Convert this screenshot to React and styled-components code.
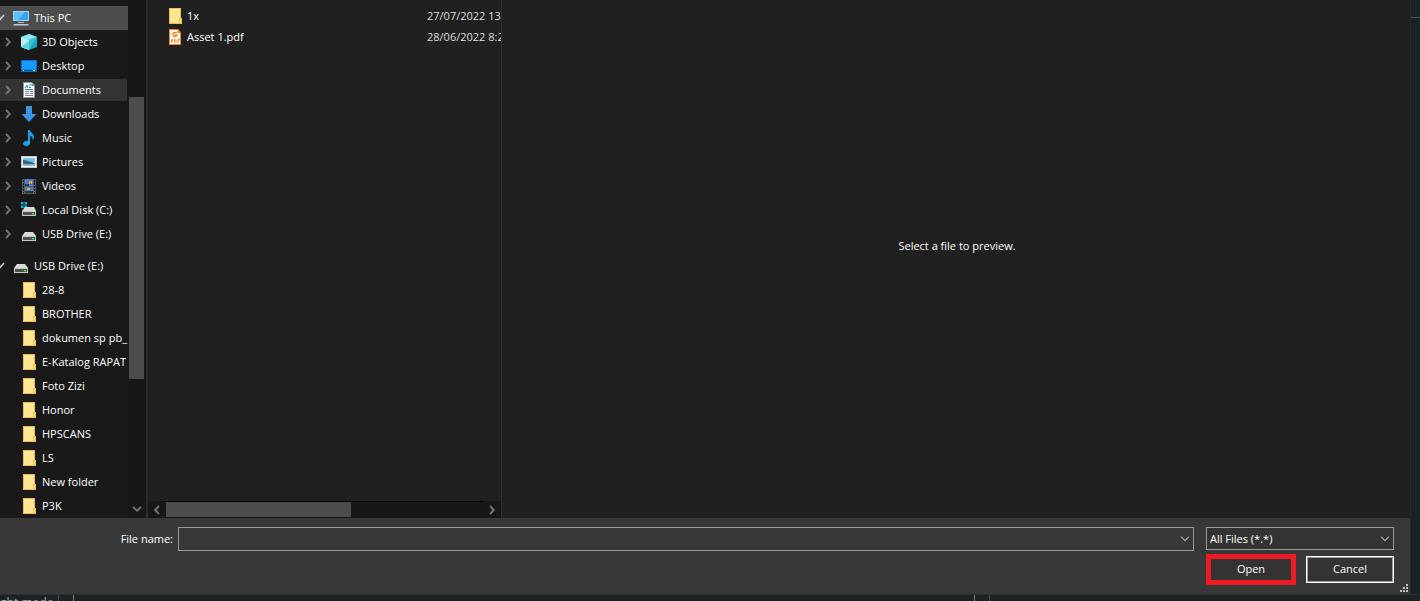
import styled, { createGlobalStyle } from 'styled-components'

const GlobalStyle = createGlobalStyle`
   * {
      box-sizing: border-box;
   }

   body {
      margin: 0;
      background-color: #1b2226;
      color: #ffffff;
      font-family: 'Open Sans', 'Noto Sans', sans-serif;
      font-size: 11px;
      line-height: 16px;
   }

   button,
   input,
   select {
      margin: 0;
      padding: 0;
      border: none;
      background: none;
      color: inherit;
      font: inherit;
   }
`

const Page = styled.div`
   display: grid;
   grid-template-columns: 1fr 9px;
   grid-template-rows: 1fr 7px;
   height: 100vh;
   overflow: hidden;
`

// dialog
const Dialog = styled.main`
   display: flex;
   flex-direction: column;
   min-width: 0;
   min-height: 0;
   border-right: 1px solid #2b2b2b;
   background-color: #383838;
`

const Panes = styled.div`
   display: grid;
   grid-template-columns: 148px 354px 1fr;
   flex: 1;
   min-height: 0;
   background-color: #202020;
`

// navigation pane
const NavPane = styled.nav`
   display: flex;
   min-height: 0;
   border-right: 2px solid #2b2b2b;
   background-color: #171717;
`

const Tree = styled.div`
   flex: 1;
   min-width: 0;
   padding-top: 6px;
   overflow: hidden;
   background-color: #191919;
`

const TreeList = styled.ul`
   margin: 0 0 8px;
   padding: 0;
   list-style: none;
`

const TreeRow = styled.button`
   display: flex;
   align-items: center;
   width: 100%;
   height: 24px;
   padding-left: ${(props) => (props.$root ? '0' : '3px')};
   overflow: hidden;
   white-space: nowrap;
   text-align: left;
   background-color: ${(props) => (props.$selected ? '#4d4d4d' : 'transparent')};
   background-image: ${(props) => (props.$hovered ? 'linear-gradient(#333333, #333333)' : 'none')};
   background-size: 127px 22px;
   background-position: 0 1px;
   background-repeat: no-repeat;
`

const Arrow = styled.span`
   display: flex;
   flex: none;
   width: ${(props) => (props.$root ? '13px' : '18px')};
`

const TreeIcon = styled.span`
   display: flex;
   flex: none;
   width: 16px;
   height: 16px;
   margin-right: 5px;
`

const NavScroll = styled.div`
   display: flex;
   flex-direction: column;
   align-items: center;
   width: 18px;
   padding: 97px 2px 4px 1px;
`

const NavThumb = styled.div`
   width: 15px;
   height: 282px;
   margin-bottom: auto;
   background-color: #4d4d4d;
`

// file list
const FilePane = styled.section`
   display: flex;
   flex-direction: column;
   min-width: 0;
   border-right: 1px solid #2e2e2e;
   overflow: hidden;
`

const FileArea = styled.div`
   flex: 1;
   padding: 5px 0 0 21px;
   overflow: hidden;
`

const FileTable = styled.table`
   width: 100%;
   table-layout: fixed;
   border-collapse: collapse;
   white-space: nowrap;
`

const FileCell = styled.td`
   width: ${(props) => props.$width || 'auto'};
   height: 21px;
   padding: 0;
   overflow: hidden;
   color: ${(props) => (props.$muted ? '#dedede' : '#ffffff')};
`

const FileName = styled.span`
   display: flex;
   align-items: center;
   gap: 5px;
`

const FileScroll = styled.div`
   display: flex;
   align-items: center;
   height: 17px;
   padding: 0 4px;
   background-color: #171717;
`

const FileTrack = styled.div`
   flex: 1;
   height: 17px;
   margin: 0 4px;
   border-top: 1px solid #000000;
`

const FileThumb = styled.div`
   width: 185px;
   height: 15px;
   background-color: #4d4d4d;
`

const Preview = styled.section`
   display: flex;
   align-items: center;
   justify-content: center;
   padding: 0 0 26px 2px;
`

// bottom bar
const Footer = styled.form`
   display: grid;
   grid-template-columns: 173px 1fr 188px;
   align-content: start;
   align-items: start;
   row-gap: 3px;
   padding: 9px 16px 9px 0;
   height: 76px;
   position: relative;
`

const NameLabel = styled.label`
   padding-top: 4px;
   text-align: right;
`

const Combo = styled.div`
   display: flex;
   height: ${(props) => (props.$small ? '23px' : '24px')};
   margin: ${(props) => (props.$small ? '0' : '0 12px 0 5px')};
   border: 1px solid #9b9b9b;
   background-color: ${(props) => (props.$small ? '#333333' : '#383838')};
`

const NameInput = styled.input`
   flex: 1;
   min-width: 0;
   padding: 0 4px;
   outline: none;
`

const DropButton = styled.button`
   display: flex;
   align-items: center;
   justify-content: center;
   width: 17px;
`

const TypeSelect = styled.select`
   flex: 1;
   padding-left: 3px;
   margin-right: -17px;
   appearance: none;
   outline: none;
`

const DropMark = styled.span`
   display: flex;
   align-items: center;
   justify-content: center;
   width: 17px;
   pointer-events: none;
`

const Buttons = styled.div`
   display: flex;
   align-items: center;
   gap: 10px;
   grid-column: 3;
`

const DialogButton = styled.button`
   width: ${(props) => (props.$marked ? '90px' : '88px')};
   height: ${(props) => (props.$marked ? '31px' : '27px')};
   padding-bottom: 2px;
   border: ${(props) => (props.$marked ? '5px solid #ed1c24' : '1px solid #ffffff')};
   background-color: #333333;
   box-shadow: ${(props) => (props.$marked ? 'none' : 'inset 0 0 0 1px #9b9b9b')};
`

const Grip = styled.svg`
   position: absolute;
   right: 2px;
   bottom: 2px;
`

// the window behind the dialog
const SideStrip = styled.div`
   height: 18px;
   border-bottom: 1px solid #4a5559;
`

const BottomStrip = styled.div`
   display: flex;
   grid-column: 1 / 3;
   height: 7px;
   overflow: hidden;
   border-top: 1px solid #2b3032;
`

const Behind = styled.div`
   width: ${(props) => props.$width};
   border-right: 1px solid ${(props) => props.$line};
   color: #9fabae;
   font-size: 12px;
   white-space: nowrap;
`

function Chevron({ dir = 'right', color = '#747474' }) {
   const turn = { right: 0, down: 90, left: 180 }[dir]
   return (
      <svg width="10" height="10" viewBox="0 0 10 10">
         <path
            d="M3 1 L6.800 5 L3 9"
            fill="none"
            stroke={color}
            strokeWidth="1.9"
            transform={`rotate(${turn} 5 5)`}
         />
      </svg>
   )
}

function OpenMark() {
   return (
      <svg width="8" height="8" viewBox="0 0 8 8">
         <path d="M-3 4 L-0.5 6 L4 1" fill="none" stroke="#d0d0d0" strokeWidth="1.6" />
      </svg>
   )
}

function DropChevron() {
   return (
      <svg width="10" height="6" viewBox="0 0 10 6">
         <path d="M1 0.7 L5 4.7 L9 0.7" fill="none" stroke="#a8a8a8" strokeWidth="1.2" />
      </svg>
   )
}

function FolderIcon() {
   return (
      <svg width="16" height="16" viewBox="0 0 16 16">
         <path d="M2 0h12v10h1v6H2z" fill="#eac04c" />
         <path d="M3 1h10v14H3z" fill="#ffe594" />
         <path d="M12 10h1v5h-1z" fill="#eac04c" />
         <path d="M13 11h1v4h-1z" fill="#ffe594" />
      </svg>
   )
}

function PdfIcon() {
   return (
      <svg width="13" height="16" viewBox="0 0 13 16">
         <path d="M0 0h9l3 3.5V16H0z" fill="#f58220" />
         <path d="M1 1h7.500v3H11v11H1z" fill="#fffaf4" />
         <path d="M9 0l3 3.500H9z" fill="#f58220" />
         <path d="M7.800 3.700C5.500 2.800 3.700 4 4 6C4.300 8 7.300 8.200 7.800 6H6" fill="none" stroke="#f58220" strokeWidth="1.5" />
         <path d="M2.500 14v-3.500h1.200v1.700H2.500M5.500 10.500v3h.6l.8-.8v-1.400l-.8-.8zM8.800 14v-3.500h1.900M8.800 12.300h1.500" fill="none" stroke="#f58220" strokeWidth="0.9" />
      </svg>
   )
}

const icons = {
   pc: (
      <>
         <path d="M0 1h16v10H0z" fill="#9bd7f5" />
         <path d="M1 2h14v8H1z" fill="#36a4ee" />
         <path d="M1 2h11L5 10H1z" fill="#62bef8" />
         <path d="M5 12h6v1H5z" fill="#a8bcc8" />
         <path d="M1 14h14l1 1.500H0z" fill="#b9cbd8" />
      </>
   ),
   cube: (
      <>
         <path d="M8 0l8 3v10l-8 3-8-3V3z" fill="#16a9bd" />
         <path d="M0 3l8-3 8 3-8 3z" fill="#8ce9f2" />
         <path d="M0 3l8 3v10l-8-3z" fill="#baf0f2" />
         <path d="M0 13l8-6v9z" fill="#63d2dd" />
         <path d="M8 6l8-3-8 13z" fill="#31c5d4" />
      </>
   ),
   desktop: (
      <>
         <path d="M0 2h16v12H0z" fill="#0f70c4" />
         <path d="M1 3h14v8.500H1z" fill="#159bff" />
         <path d="M1 12h14v1H1z" fill="#075597" />
         <path d="M2 12h1v1H2zM12 12h2v1h-2z" fill="#d6edff" />
      </>
   ),
   document: (
      <>
         <path d="M2 0h9l3 3v13H2z" fill="#8f9496" />
         <path d="M3 1h7.500v3H13v11H3z" fill="#ffffff" />
         <path d="M4 6l2-3 1 3M8 3h2M8 5.500h2M4 7.500h8M9 9.500h3" fill="none" stroke="#2683c6" />
         <path d="M4 9.500h4M4 11.500h4M4 13.500h8M9 11.500h3" stroke="#7d878e" />
      </>
   ),
   download: <path d="M5 0h6v8h4.500L8 16 0.500 8H5z" fill="#3894e4" />,
   music: (
      <path
         d="M7 0h2c0 3 4 3.500 4 7 0 1.800-1 2.800-1.500 3C12 7.500 11 6.300 9 5.700V13c0 2-1.500 3-3.500 3S2 15 2 13.500 4 10.500 7 11z"
         fill="#15a1f5"
      />
   ),
   picture: (
      <>
         <path d="M0 2h16v12H0z" fill="#c6c6c6" />
         <path d="M1 3h14v10H1z" fill="#ffffff" />
         <path d="M2 4h12v4H2z" fill="#76bdf0" />
         <path d="M2 6c3 0 7 2 12 3v1H2z" fill="#316477" />
         <path d="M2 10h12v2H2z" fill="#8ab9cf" />
      </>
   ),
   video: (
      <>
         <path d="M1 1h14v15H1z" fill="#5a5b5d" />
         <path d="M4 1h8v7H4zM4 9h8v6H4z" fill="#3f7edb" />
         <path d="M4 6h4v2H4zM4 13h8v2H4z" fill="#23402f" />
         <path d="M8 3h3v3H8zM6 10h3v2H6z" fill="#e4a832" />
         <path d="M9 5h1v2H9zM7 12h1v1H7z" fill="#d9462b" />
         <path d="M2.500 2v13M13.500 2v13" stroke="#111111" strokeDasharray="2 1" />
      </>
   ),
   local: (
      <>
         <path d="M0 0h2.500v2.500H0zM3.500 0H6v2.500H3.500zM0 3.500h2.500V6H0zM3.500 3.500H6V6H3.500z" fill="#12b8ec" />
         <path d="M4 5h9l2 4H1z" fill="#d9d9d9" />
         <path d="M1 9h14v5H1z" fill="#c8c8c8" />
         <path d="M2 10h12v3H2z" fill="#4b4f50" />
         <path d="M11 11h2v1.500h-2z" fill="#2cf03c" />
      </>
   ),
   drive: (
      <>
         <path d="M4 6h8l3 4H1z" fill="#d9d9d9" />
         <path d="M1 10h14v5H1z" fill="#c8c8c8" />
         <path d="M2 11h12v3H2z" fill="#4b4f50" />
         <path d="M11 12h2v1.500h-2z" fill="#2cf03c" />
      </>
   ),
}

function Icon({ name }) {
   if (name === 'folder') return <FolderIcon />
   return (
      <svg width="16" height="16" viewBox="0 0 16 16">
         {icons[name]}
      </svg>
   )
}

const groups = [
   [
      { icon: 'pc', label: 'This PC', root: true, selected: true },
      { icon: 'cube', label: '3D Objects', arrow: true },
      { icon: 'desktop', label: 'Desktop', arrow: true },
      { icon: 'document', label: 'Documents', arrow: true, hovered: true },
      { icon: 'download', label: 'Downloads', arrow: true },
      { icon: 'music', label: 'Music', arrow: true },
      { icon: 'picture', label: 'Pictures', arrow: true },
      { icon: 'video', label: 'Videos', arrow: true },
      { icon: 'local', label: 'Local Disk (C:)', arrow: true },
      { icon: 'drive', label: 'USB Drive (E:)', arrow: true },
   ],
   [
      { icon: 'drive', label: 'USB Drive (E:)', root: true },
      { icon: 'folder', label: '28-8' },
      { icon: 'folder', label: 'BROTHER' },
      { icon: 'folder', label: 'dokumen sp pb_' },
      { icon: 'folder', label: 'E-Katalog RAPAT' },
      { icon: 'folder', label: 'Foto Zizi' },
      { icon: 'folder', label: 'Honor' },
      { icon: 'folder', label: 'HPSCANS' },
      { icon: 'folder', label: 'LS' },
      { icon: 'folder', label: 'New folder' },
      { icon: 'folder', label: 'P3K' },
   ],
]

function Navigation() {
   return (
      <NavPane>
         <Tree>
            {groups.map((items, index) => (
               <TreeList key={index}>
                  {items.map((item) => (
                     <li key={item.label}>
                        <TreeRow type="button" $root={item.root} $selected={item.selected} $hovered={item.hovered}>
                           <Arrow $root={item.root}>
                              {item.root && <OpenMark />}
                              {item.arrow && <Chevron />}
                           </Arrow>
                           <TreeIcon>
                              <Icon name={item.icon} />
                           </TreeIcon>
                           {item.label}
                        </TreeRow>
                     </li>
                  ))}
               </TreeList>
            ))}
         </Tree>
         <NavScroll>
            <NavThumb />
            <Chevron dir="down" />
         </NavScroll>
      </NavPane>
   )
}

function Files() {
   return (
      <FilePane>
         <FileArea>
            <FileTable>
               <tbody>
                  <tr>
                     <FileCell $width="258px">
                        <FileName>
                           <svg width="13" height="16" viewBox="2 0 13 16">
                              <FolderIcon />
                           </svg>
                           1x
                        </FileName>
                     </FileCell>
                     <FileCell $muted>27/07/2022 13</FileCell>
                  </tr>
                  <tr>
                     <FileCell>
                        <FileName>
                           <PdfIcon />
                           Asset 1.pdf
                        </FileName>
                     </FileCell>
                     <FileCell $muted>28/06/2022 8:2</FileCell>
                  </tr>
               </tbody>
            </FileTable>
         </FileArea>
         <FileScroll>
            <Chevron dir="left" />
            <FileTrack>
               <FileThumb />
            </FileTrack>
            <Chevron />
         </FileScroll>
      </FilePane>
   )
}

function App() {
   return (
      <>
         <GlobalStyle />
         <Page>
            <Dialog>
               <Panes>
                  <Navigation />
                  <Files />
                  <Preview>Select a file to preview.</Preview>
               </Panes>
               <Footer onSubmit={(e) => e.preventDefault()}>
                  <NameLabel htmlFor="file-name">File name:</NameLabel>
                  <Combo>
                     <NameInput id="file-name" type="text" />
                     <DropButton type="button" aria-label="Recent names">
                        <DropChevron />
                     </DropButton>
                  </Combo>
                  <Combo $small>
                     <TypeSelect aria-label="File type">
                        <option>All Files (*.*)</option>
                     </TypeSelect>
                     <DropMark>
                        <DropChevron />
                     </DropMark>
                  </Combo>
                  <Buttons>
                     <DialogButton type="submit" $marked>
                        Open
                     </DialogButton>
                     <DialogButton type="button">Cancel</DialogButton>
                  </Buttons>
                  <Grip width="8" height="8" viewBox="0 0 8 8">
                     <path d="M6 0h2v2H6zM3 3h2v2H3zM6 3h2v2H6zM0 6h2v2H0zM3 6h2v2H3zM6 6h2v2H6z" fill="#bfbfbf" />
                  </Grip>
               </Footer>
            </Dialog>
            <SideStrip />
            <BottomStrip>
               <Behind $width="59px" $line="#4a5559">
                  ght mode
               </Behind>
               <Behind $width="15px" $line="#7d898d" />
               <Behind $width="901px" $line="#7d898d" />
               <Behind $width="15px" $line="#4a5559" />
            </BottomStrip>
         </Page>
      </>
   )
}

export default App
